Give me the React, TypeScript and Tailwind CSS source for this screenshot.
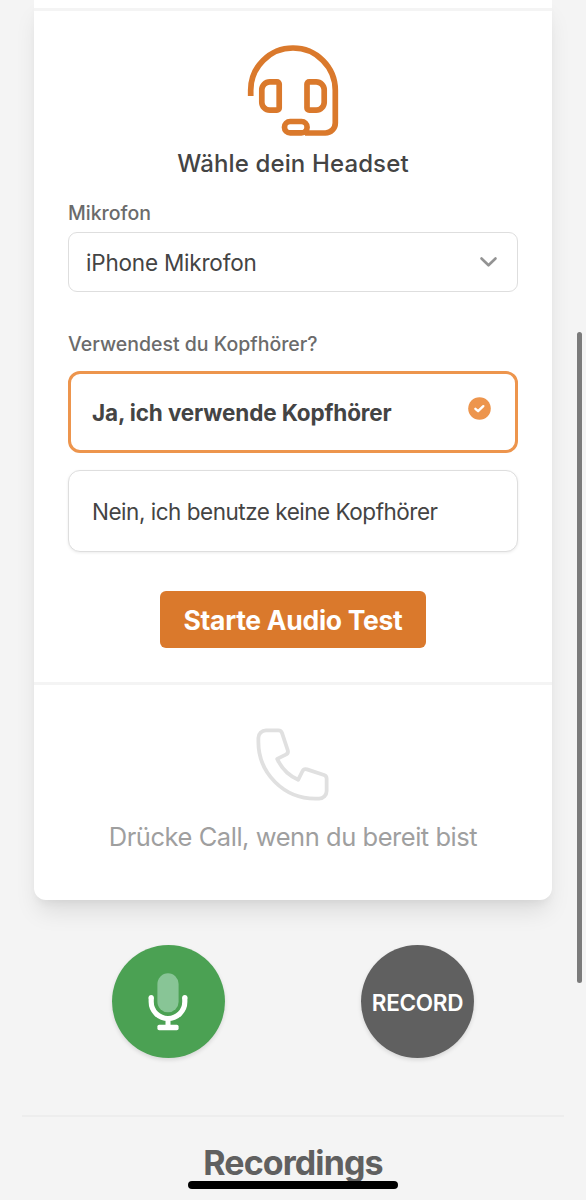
import type { ReactNode } from "react";

function HeadsetIcon() {
  return (
    <svg
      className="mx-auto block h-[92px] w-[92px]"
      viewBox="0 0 92 92"
      fill="none"
      stroke="#da792c"
      strokeWidth="5.7"
    >
      <path d="M3.7 52V46.3a42.3 42.3 0 0 1 84.6 0V79a10 10 0 0 1-10 10H58" />
      <rect x="37.5" y="77.5" width="22.6" height="11.3" rx="5.65" />
      <path d="M22.8 37.8H30a2.2 2.2 0 0 1 2.2 2.2v24a2.2 2.2 0 0 1-2.2 2.2h-7.2a8 8 0 0 1-8-8V45.8a8 8 0 0 1 8-8z" />
      <path d="M69.2 37.8H62.2a2.2 2.2 0 0 0-2.2 2.2v24a2.2 2.2 0 0 0 2.2 2.2h7a8 8 0 0 0 8-8V45.8a8 8 0 0 0-8-8z" />
    </svg>
  );
}

function PhoneIcon() {
  return (
    <svg
      className="mr-[1px] block h-[91px] w-[91px] text-[#e0e0e0]"
      viewBox="0 0 24 24"
      fill="none"
      stroke="currentColor"
      strokeWidth="1"
      strokeLinecap="round"
      strokeLinejoin="round"
    >
      <path d="M3 5a2 2 0 012-2h3.28a1 1 0 01.948.684l1.498 4.493a1 1 0 01-.502 1.21l-2.257 1.13a11.042 11.042 0 005.516 5.516l1.13-2.257a1 1 0 011.21-.502l4.493 1.498a1 1 0 01.684.949V19a2 2 0 01-2 2h-1C9.716 21 3 14.284 3 6V5z" />
    </svg>
  );
}

function MicIcon() {
  return (
    <svg className="h-[58px] w-10" viewBox="0 0 40 58" fill="none">
      <rect x="9.4" y="0.3" width="21.2" height="39" rx="10.6" fill="#88c596" />
      <path
        d="M3.2 24.5V28.7a16.8 16.8 0 0 0 33.6 0V24.5"
        stroke="white"
        strokeWidth="5.2"
      />
      <circle cx="3.2" cy="24.6" r="2.6" fill="white" />
      <circle cx="36.8" cy="24.6" r="2.6" fill="white" />
      <path d="M20 45v9" stroke="white" strokeWidth="5" />
      <rect x="9.4" y="51.8" width="21.2" height="5.4" rx="1.8" fill="white" />
    </svg>
  );
}

type OptionProps = {
  selected?: boolean;
  children: ReactNode;
};

function Option({ selected = false, children }: OptionProps) {
  return (
    <button
      className={`flex w-full items-center justify-between rounded-[12px] bg-white text-left text-[22.5px] leading-8 text-[#444444] ${
        selected
          ? "h-[82px] border-3 border-[#ed954d] pr-[24px] pl-[21px] font-bold tracking-[-0.14px]"
          : "h-[82px] border border-[#dedede] px-[23px] tracking-[-0.48px] shadow-[0_1px_3px_rgba(0,0,0,0.08)]"
      }`}
    >
      <span className="pt-[1px]">{children}</span>
      {selected && (
        <svg className="mb-[7px] h-[23px] w-[23px]" viewBox="0 0 23 23" fill="none">
          <circle cx="11.5" cy="11.5" r="11.3" fill="#ed954d" />
          <path
            d="M7.4 11.8l2.7 2.4 5.2-5"
            stroke="white"
            strokeWidth="2.4"
            strokeLinecap="round"
            strokeLinejoin="round"
          />
        </svg>
      )}
    </button>
  );
}

export default function App() {
  return (
    <div className="relative h-[1200px] w-[586px] overflow-hidden bg-[#f4f4f4] font-['Inter','Liberation_Sans',sans-serif] text-[#444444]">
      <main className="mx-[34px] h-[900px] rounded-b-[12px] bg-white shadow-[0_15px_23px_-4px_rgba(0,0,0,0.1),0_6px_9px_-3px_rgba(0,0,0,0.05)]">
        <div className="h-[11px] border-b-3 border-[#f4f4f4]" />

        <section className="h-[674px] border-b-3 border-[#f4f4f4] px-[34px] pt-[33px]">
          <HeadsetIcon />
          <h2 className="mt-[10px] text-center text-[24px] leading-9 font-medium tracking-[0.13px] whitespace-nowrap">
            Wähle dein Headset
          </h2>

          <div className="mt-4 text-[19.5px] leading-[30px] font-medium text-[#6b6b6b]">
            Mikrofon
          </div>
          <button className="mt-[4px] flex h-[60px] w-full items-center justify-between rounded-[9px] border border-[#dedede] pr-[19px] pl-[17px] text-[22.5px] leading-8 tracking-[-0.2px]">
            <span className="pt-[1px]">iPhone Mikrofon</span>
            <svg
              className="h-5 w-5"
              viewBox="0 0 20 20"
              fill="none"
              stroke="#939393"
              strokeWidth="2.6"
              strokeLinecap="round"
              strokeLinejoin="round"
            >
              <path d="M3.5 6.5l7 6.8 7-6.8" />
            </svg>
          </button>

          <div className="mt-[37px] text-[19.5px] leading-[30px] font-medium text-[#6b6b6b]">
            Verwendest du Kopfhörer?
          </div>
          <div className="mt-[12px] flex flex-col gap-[17px]">
            <Option selected>Ja, ich verwende Kopfhörer</Option>
            <Option>Nein, ich benutze keine Kopfhörer</Option>
          </div>

          <button className="mx-auto mt-[39px] flex h-[57px] w-[266px] items-center justify-center rounded-[6px] bg-[#da792c] pt-[3px] text-[26.5px] font-bold tracking-[-0.3px] whitespace-nowrap text-white">
            Starte Audio Test
          </button>
        </section>

        <section className="flex flex-col items-center pt-[34px]">
          <PhoneIcon />
          <p className="mt-[9px] text-[25.5px] leading-9 tracking-[-0.46px] whitespace-nowrap text-[#9f9f9f]">
            Drücke Call, wenn du bereit bist
          </p>
        </section>
      </main>

      <div className="mt-[45px] flex gap-[136px] pl-[112px]">
        <button className="flex h-[113px] w-[113px] items-center justify-center rounded-full bg-[#4ba153] pr-[1px] shadow-[0_2px_4px_rgba(0,0,0,0.12)]">
          <MicIcon />
        </button>
        <button className="flex h-[113px] w-[113px] items-center justify-center rounded-full bg-[#606060] pt-[2px] text-[22.5px] font-semibold tracking-[-0.3px] text-white shadow-[0_2px_4px_rgba(0,0,0,0.12)]">
          RECORD
        </button>
      </div>

      <hr className="mx-[22px] mt-[57px] border-t-2 border-[#ededed]" />
      <h2 className="mt-[23px] text-center text-[34px] leading-[46px] font-bold tracking-[-0.9px] text-[#606060]">
        Recordings
      </h2>

      {/* scroll thumb and home indicator float over the page */}
      <div className="absolute top-[332px] right-[4px] h-[651px] w-[5px] rounded-full bg-[#7b7b7b]" />
      <div className="absolute top-[1181px] left-[188px] h-[8px] w-[210px] rounded-full bg-black" />
    </div>
  );
}
